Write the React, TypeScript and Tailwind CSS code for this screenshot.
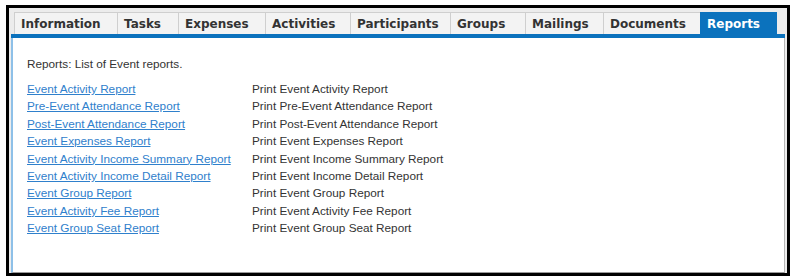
import React from "react";

const tabs: [string, string][] = [
  ["Information", "w-[103px]"],
  ["Tasks", "w-[61px]"],
  ["Expenses", "w-[87px]"],
  ["Activities", "w-[85px]"],
  ["Participants", "w-[100px]"],
  ["Groups", "w-[75px]"],
  ["Mailings", "w-[78px]"],
  ["Documents", "w-[97px]"],
  ["Reports", "w-[77px]"],
];

const reports: [string, string][] = [
  ["Event Activity Report", "Print Event Activity Report"],
  ["Pre-Event Attendance Report", "Print Pre-Event Attendance Report"],
  ["Post-Event Attendance Report", "Print Post-Event Attendance Report"],
  ["Event Expenses Report", "Print Event Expenses Report"],
  ["Event Activity Income Summary Report", "Print Event Income Summary Report"],
  ["Event Activity Income Detail Report", "Print Event Income Detail Report"],
  ["Event Group Report", "Print Event Group Report"],
  ["Event Activity Fee Report", "Print Event Activity Fee Report"],
  ["Event Group Seat Report", "Print Event Group Seat Report"],
];

const App: React.FC = () => {
  const active = "Reports";

  return (
    <div className="bg-white w-[790px] h-[280px] pt-[5px] pl-[6px] overflow-hidden">
      <div className="w-[784px] h-[271px] border-[3px] border-black bg-[#ececec] flex flex-col pl-[2px] pt-[4px] pr-[2px]">
        {/* tab strip */}
        <div className="flex pl-[3px] h-[22px] font-['DejaVu_Sans',sans-serif] text-[12px] font-bold">
          {tabs.map(([t, w]) =>
            t === active ? (
              <div
                key={t}
                className={`${w} shrink-0 h-full pl-[7px] flex items-center bg-[#0b72bd] text-white border-t border-[#0b72bd]`}
              >
                {t}
              </div>
            ) : (
              <div
                key={t}
                className={`${w} shrink-0 h-full pl-[6px] flex items-center bg-[#f3f3f3] text-[#333333] border-l border-t border-[#cfcfcf]`}
              >
                {t}
              </div>
            )
          )}
        </div>
        <div className="h-[4px] bg-[#0b72bd]" />

        {/* panel */}
        <div className="flex-1 bg-white border-l-[2px] border-l-[#8ec0e8] border-r border-r-[#b5b5b5] border-b border-b-[#9a9a9a] pl-[14px] pt-[19px] font-['Liberation_Sans',Arial,sans-serif] text-[11.75px] text-[#333333]">
          <p className="leading-[14px]">Reports: List of Event reports.</p>
          <div className="mt-[9px] grid grid-cols-[225px_1fr] leading-[17.4px]">
            {reports.map(([name, desc]) => (
              <React.Fragment key={name}>
                <a href="#" className="text-[#2f80cc] underline w-fit">
                  {name}
                </a>
                <span>{desc}</span>
              </React.Fragment>
            ))}
          </div>
        </div>
      </div>
    </div>
  );
};

export default App;
